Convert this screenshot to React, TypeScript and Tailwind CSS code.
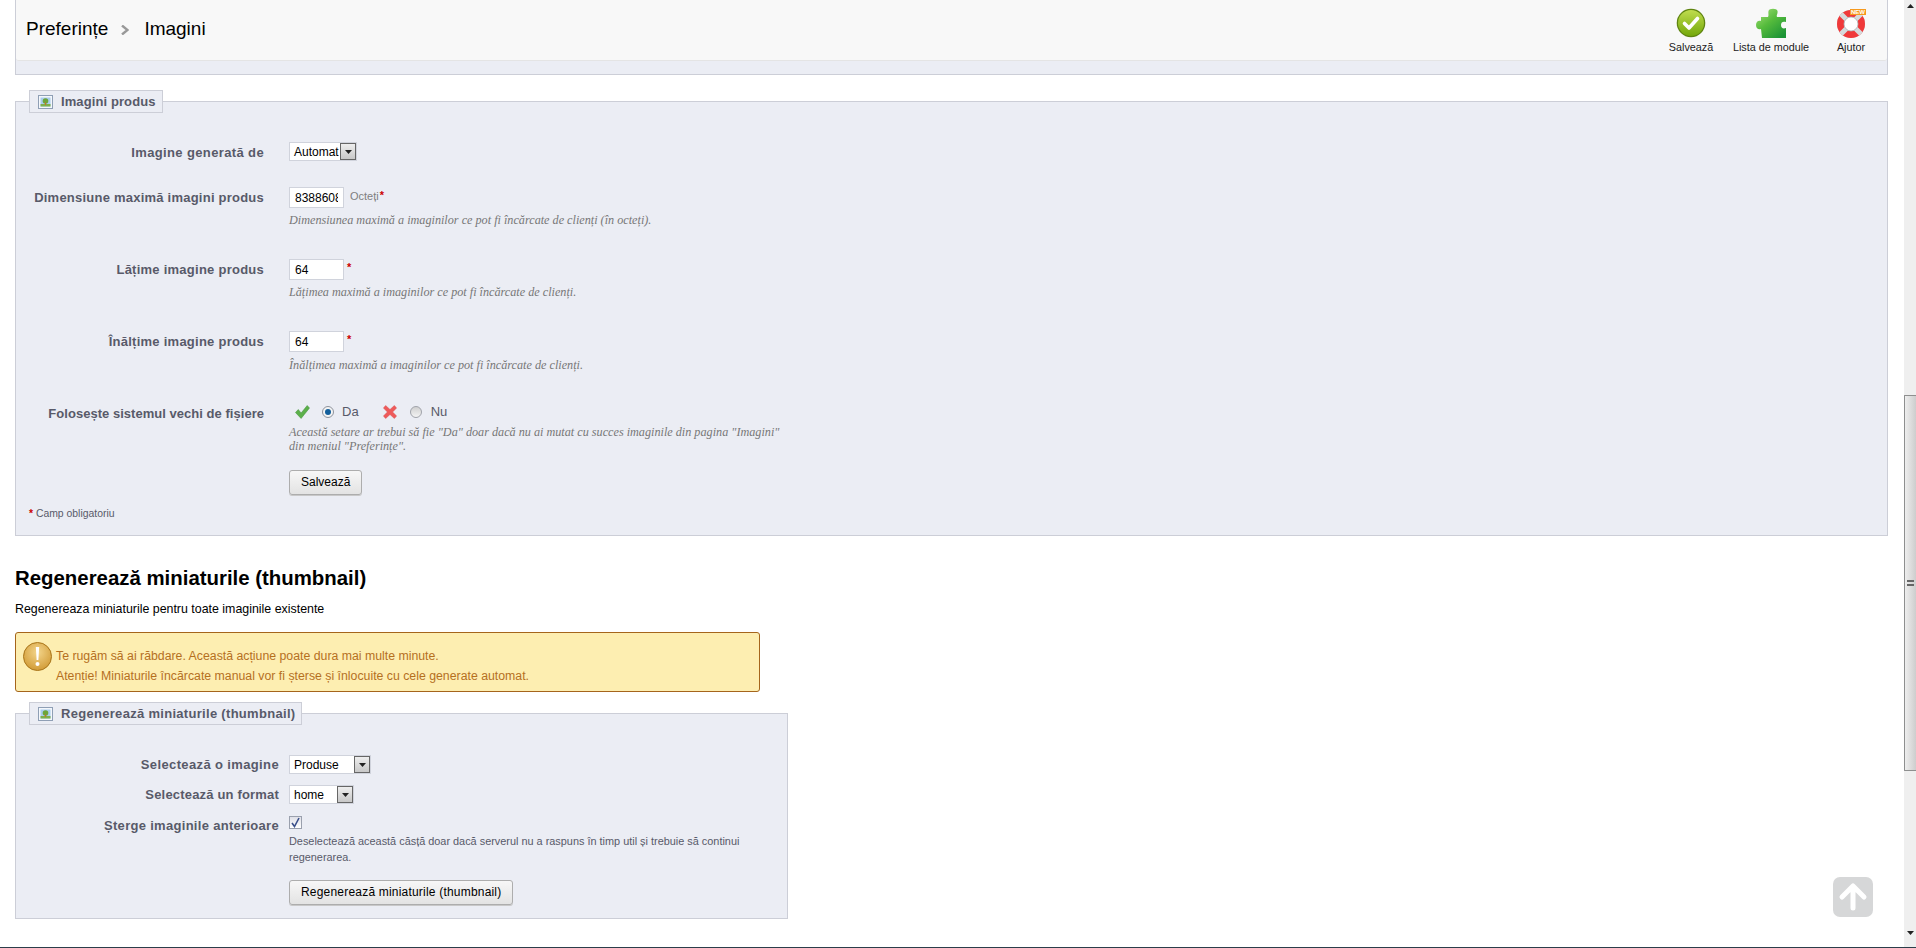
import type { ReactNode } from "react";

const ImageIcon = () => (
  <svg width="15" height="16" viewBox="0 0 15 16" className="shrink-0">
    <rect x="0.5" y="1.5" width="14" height="13" fill="#f4f7fb" stroke="#8f9fb5" />
    <rect x="2.5" y="3.5" width="10" height="9" fill="#a9cdee" />
    <rect x="2.5" y="10" width="10" height="2.5" fill="#7fb04c" />
    <circle cx="7.5" cy="7" r="2.8" fill="#6da53a" />
    <rect x="6.9" y="8.5" width="1.2" height="2.5" fill="#c0762c" />
  </svg>
);

const SaveIcon = () => (
  <svg width="30" height="30" viewBox="0 0 30 30">
    <defs>
      <linearGradient id="saveFill" x1="0" y1="0" x2="0" y2="1">
        <stop offset="0" stopColor="#bfdc4e" />
        <stop offset="1" stopColor="#74a80a" />
      </linearGradient>
    </defs>
    <circle cx="15" cy="15" r="14.3" fill="#5f8410" />
    <circle cx="15" cy="15" r="13" fill="url(#saveFill)" />
    <path d="M8.5 15.5 L13 20 L21.5 10.5" fill="none" stroke="#fff" strokeWidth="3.6" strokeLinecap="round" strokeLinejoin="round" />
  </svg>
);

const PuzzleIcon = () => (
  <svg width="30" height="30" viewBox="0 0 30 30">
    <defs>
      <linearGradient id="puzzleFill" x1="0" y1="0" x2="0.8" y2="1">
        <stop offset="0" stopColor="#a9e27c" />
        <stop offset="0.5" stopColor="#55bb3c" />
        <stop offset="1" stopColor="#1c9436" />
      </linearGradient>
    </defs>
    <path
      d="M5 9 L12 9 C13 7 12 6 12.5 3 C13 0 21 0 21.5 3 C22 6 20 7 21 9 L30 9 L30 14 C27 13 25 14 25 17 C25 20 27 21 30 20 L30 30 L6 30 L5 21 C3 22 0 21 0 17 C0 13 3 12 5 13 Z"
      fill="url(#puzzleFill)"
    />
  </svg>
);

const HelpIcon = () => (
  <svg width="30" height="30" viewBox="0 0 30 30">
    <circle cx="15" cy="16" r="14" fill="#c9ccce" />
    <circle cx="15" cy="16" r="10.5" fill="none" stroke="#f0393a" strokeWidth="7" />
    <path d="M5 6 L10.5 11.5 M25 6 L19.5 11.5 M5 26 L10.5 20.5 M25 26 L19.5 20.5" stroke="#d6d9db" strokeWidth="5" />
    <circle cx="15" cy="16" r="7" fill="#fff" stroke="#a9aeb2" strokeWidth="0.8" />
    <rect x="14" y="1" width="16" height="6" fill="#f79a1e" />
    <text x="22" y="6.4" textAnchor="middle" fontSize="6" fontWeight="700" fill="#fff" fontFamily="Liberation Sans">NEW</text>
  </svg>
);

const WarningIcon = () => (
  <svg width="29" height="29" viewBox="0 0 29 29" className="shrink-0">
    <defs>
      <radialGradient id="warnFill" cx="0.5" cy="0.35" r="0.7">
        <stop offset="0" stopColor="#f3d58b" />
        <stop offset="1" stopColor="#cf9730" />
      </radialGradient>
    </defs>
    <circle cx="14.5" cy="14.5" r="14" fill="url(#warnFill)" stroke="#a9751a" />
    <path d="M12.8 5 L16.2 5 L15.4 18 L13.6 18 Z" fill="#fff" />
    <circle cx="14.5" cy="22" r="2" fill="#fff" />
  </svg>
);

const Arrow = ({ up }: { up?: boolean }) => (
  <svg width="7" height="4" viewBox="0 0 7 4">
    <path d={up ? "M0 4 L7 4 L3.5 0 Z" : "M0 0 L7 0 L3.5 4 Z"} fill="#222" />
  </svg>
);

// old windows style dropdown
const FakeSelect = ({ text, width }: { text: string; width: string }) => (
  <div className={`flex h-[19px] items-center overflow-hidden border border-[#d0d3dc] bg-white ${width}`}>
    <span className="overflow-hidden whitespace-nowrap pl-[4px] text-[12px] text-black">{text}</span>
    <span className="ml-auto flex h-[17px] w-[16px] shrink-0 items-center justify-center border border-[#666] bg-gradient-to-b from-[#eeeeee] to-[#c8c8c8]">
      <Arrow />
    </span>
  </div>
);

const Star = () => <span className="text-[11px] font-bold leading-[16px] text-[#cc0000]">*</span>;

const TextInput = ({ value }: { value: string }) => (
  <input
    readOnly
    defaultValue={value}
    className="h-[21px] w-[55px] border border-[#d0d3dc] bg-white pl-[5px] pr-[5px] text-[12px] text-black outline-none [font-family:'Liberation_Sans',sans-serif]"
  />
);

const Help = ({ children }: { children: ReactNode }) => (
  <p className="text-[12.2px] italic leading-[14px] text-[#777777] [font-family:'Liberation_Serif',serif]">{children}</p>
);

const Row = ({ label, top, track, children }: { label: string; top: string; track: string; children: ReactNode }) => (
  <div className={`flex ${top}`}>
    <div className={`w-[248px] text-right text-[13px] font-bold leading-[21px] text-[#585a69] ${track}`}>{label}</div>
    <div className="ml-[25px] flex-1">{children}</div>
  </div>
);

const SmallRow = ({ label, top, track, children }: { label: string; top: string; track: string; children: ReactNode }) => (
  <div className={`flex ${top}`}>
    <div className={`w-[263px] text-right text-[13px] font-bold leading-[20px] text-[#585a69] ${track}`}>{label}</div>
    <div className="ml-[10px]">{children}</div>
  </div>
);

const Legend = ({ children, track }: { children: ReactNode; track: string }) => (
  <legend className={`ml-[13px] flex h-[23px] items-center gap-[8px] border border-[#ccced7] bg-[#ebedf4] pl-[8px] pr-[6px] text-[13px] font-bold text-[#585a69] ${track}`}>
    <ImageIcon />
    {children}
  </legend>
);

const Btn = ({ children, track = "" }: { children: ReactNode; track?: string }) => (
  <button className={`h-[25px] rounded-[3px] border border-[#adadad] bg-gradient-to-b from-[#f7f7f7] to-[#e3e3e3] px-[11px] text-[12px] text-black shadow-[0_1px_0_#c8c8c8] ${track}`}>
    {children}
  </button>
);

const ToolItem = ({ icon, label, w }: { icon: ReactNode; label: string; w: string }) => (
  <div className={`flex flex-col items-center ${w}`}>
    <div className="h-[32px]">{icon}</div>
    <span className="mt-px whitespace-nowrap text-[10.8px] leading-[13px] text-[#222]">{label}</span>
  </div>
);

export default function App() {
  return (
    <div className="relative flex h-[948px] flex-col overflow-hidden bg-white [font-family:'Liberation_Sans',Arial,sans-serif]">
      <div className="flex min-h-0 flex-1">
        <main className="flex-1 pl-[15px] pr-[16px]">
          {/* toolbar */}
          <div className="h-[75px] border-x border-b border-[#ccced7] bg-[#ebedf4]">
            <div className="flex h-[61px] items-start justify-between rounded-b-[3px] border-b border-[#e4e4e4] bg-[#f8f8f8] pl-[10px] pr-[6px]">
              <div className="flex h-[59px] items-center text-[19px] text-black">
                <span>Preferințe</span>
                <svg width="8" height="10" viewBox="0 0 8 10" className="ml-[13px] mr-[15px]">
                  <path d="M1 0.5 L6.5 5 L1 9.5" fill="none" stroke="#999" strokeWidth="2.4" />
                </svg>
                <span>Imagini</span>
              </div>
              <div className="flex pt-[8px]">
                <ToolItem icon={<SaveIcon />} label="Salvează" w="w-[60px]" />
                <ToolItem icon={<PuzzleIcon />} label="Lista de module" w="w-[100px]" />
                <ToolItem icon={<HelpIcon />} label="Ajutor" w="w-[60px]" />
              </div>
            </div>
          </div>

          {/* imagini produs */}
          <fieldset className="mt-[15px] h-[446px] border border-[#ccced7] bg-[#ebedf4]">
            <Legend track="tracking-[0.1px]">Imagini produs</Legend>
            <Row label="Imagine generată de" top="mt-[29px]" track="tracking-[0.37px]">
              <FakeSelect text="Automat" width="w-[68px]" />
            </Row>
            <Row label="Dimensiune maximă imagini produs" top="mt-[24px]" track="tracking-[0.23px]">
              <div className="flex items-start">
                <TextInput value="8388608" />
                <span className="ml-[6px] text-[11px] leading-[18px] text-[#7f7f7f]">Octeți</span>
                <span className="ml-px flex"><Star /></span>
              </div>
              <div className="mt-[5px]">
                <Help>Dimensiunea maximă a imaginilor ce pot fi încărcate de clienți (în octeți).</Help>
              </div>
            </Row>
            <Row label="Lățime imagine produs" top="mt-[32px]" track="tracking-[0.25px]">
              <div className="flex items-start">
                <TextInput value="64" />
                <span className="ml-[3px] flex"><Star /></span>
              </div>
              <div className="mt-[5px]">
                <Help>Lățimea maximă a imaginilor ce pot fi încărcate de clienți.</Help>
              </div>
            </Row>
            <Row label="Înălțime imagine produs" top="mt-[32px]" track="tracking-[0.25px]">
              <div className="flex items-start">
                <TextInput value="64" />
                <span className="ml-[3px] flex"><Star /></span>
              </div>
              <div className="mt-[6px]">
                <Help>Înălțimea maximă a imaginilor ce pot fi încărcate de clienți.</Help>
              </div>
            </Row>
            <Row label="Folosește sistemul vechi de fișiere" top="mt-[31px]" track="tracking-[0.03px]">
              <div className="flex h-[18px] items-center pl-[6px] text-[13px] text-[#585a69]">
                <svg width="15" height="14" viewBox="0 0 16 14" preserveAspectRatio="none">
                  <path d="M0.5 7.5 L3.5 4.5 L6.5 8 L13 0.5 L15.5 3 L6.5 13.5 Z" fill="#5cb04a" stroke="#3f8c35" strokeWidth="0.5" />
                </svg>
                <span className="ml-[12px] flex h-[12px] w-[12px] items-center justify-center rounded-full border border-[#8d929c] bg-[#f4f4f4]">
                  <span className="h-[6px] w-[6px] rounded-full bg-[#135f9c]" />
                </span>
                <span className="ml-[8px]">Da</span>
                <svg width="14" height="14" viewBox="0 0 16 14" preserveAspectRatio="none" className="ml-[24px]">
                  <path d="M3 0.5 L8 4.5 L13 0.5 L15.5 3 L11 7 L15.5 11 L13 13.5 L8 9.5 L3 13.5 L0.5 11 L5 7 L0.5 3 Z" fill="#ee5a5a" stroke="#d94a4a" strokeWidth="0.5" />
                </svg>
                <span className="ml-[13px] h-[12px] w-[12px] rounded-full border border-[#a0a3aa] bg-gradient-to-b from-[#d0d0d0] to-[#f4f4f4]" />
                <span className="ml-[9px]">Nu</span>
              </div>
              <div className="mt-[4px] w-[495px]">
                <Help>
                  Această setare ar trebui să fie "Da" doar dacă nu ai mutat cu succes imaginile din pagina "Imagini" din meniul "Preferințe".
                </Help>
              </div>
              <div className="mt-[16px]">
                <Btn>Salvează</Btn>
              </div>
            </Row>
            <p className="ml-[13px] mt-[12px] text-[10.4px] leading-[14px] text-[#585a69]">
              <span className="font-bold text-[#cc0000]">*</span> Camp obligatoriu
            </p>
          </fieldset>

          {/* regenerare */}
          <h2 className="mt-[30px] text-[20.4px] font-bold leading-[24px] text-black">Regenerează miniaturile (thumbnail)</h2>
          <p className="mt-[12px] text-[12.4px] leading-[14px] text-black">Regenereaza miniaturile pentru toate imaginile existente</p>
          <div className="mt-[16px] flex h-[60px] w-[745px] items-start rounded-[3px] border border-[#a5651c] bg-[#fdeeb1] pl-[7px] pt-[9px] text-[12.3px] leading-[20px] text-[#b5701f]">
            <WarningIcon />
            <div className="ml-[4px] pt-[4px]">
              <div>Te rugăm să ai răbdare. Această acțiune poate dura mai multe minute.</div>
              <div>Atenție! Miniaturile încărcate manual vor fi șterse și înlocuite cu cele generate automat.</div>
            </div>
          </div>

          <fieldset className="mt-[10px] h-[217px] w-[773px] border border-[#ccced7] bg-[#ebedf4]">
            <Legend track="tracking-[0.3px]">Regenerează miniaturile (thumbnail)</Legend>
            <SmallRow label="Selectează o imagine" top="mt-[30px]" track="tracking-[0.37px]">
              <FakeSelect text="Produse" width="w-[82px]" />
            </SmallRow>
            <SmallRow label="Selectează un format" top="mt-[10px]" track="tracking-[0.18px]">
              <FakeSelect text="home" width="w-[65px]" />
            </SmallRow>
            <SmallRow label="Șterge imaginile anterioare" top="mt-[11px]" track="tracking-[0.3px]">
              <div className="w-[480px]">
                <div className="flex h-[13px] w-[13px] items-center justify-center border border-[#9aa0ad] bg-gradient-to-b from-[#dfe0e8] to-[#ffffff]">
                  <svg width="9" height="11" viewBox="0 0 9 11">
                    <path d="M1 6 L3.5 9.5 L8 1" fill="none" stroke="#3a4f8a" strokeWidth="1.6" />
                  </svg>
                </div>
                <p className="mt-[4px] text-[10.9px] leading-[16px] text-[#585a69]">
                  Deselectează această căsță doar dacă serverul nu a raspuns în timp util și trebuie să continui regenerarea.
                </p>
                <div className="mt-[14px]">
                  <Btn track="tracking-[0.2px]">Regenerează miniaturile (thumbnail)</Btn>
                </div>
              </div>
            </SmallRow>
          </fieldset>
        </main>

        {/* scrollbar */}
        <div className="flex w-[12px] flex-col bg-[#efefef]">
          <div className="flex h-[12px] items-center justify-center"><Arrow up /></div>
          <div className="h-[383px]" />
          <div className="flex h-[376px] items-center justify-center rounded-l-[1px] border border-r-0 border-[#8e8f8f] bg-gradient-to-r from-[#eeeeee] to-[#cdcdcd]">
            <span className="h-[6px] w-[7px] border-y-2 border-[#666]" />
          </div>
          <div className="flex-1" />
          <div className="flex h-[16px] items-start justify-center"><Arrow /></div>
        </div>
      </div>

      {/* taskbar edge */}
      <div className="h-px bg-[#2c3e4a]" />

      {/* back to top */}
      <div className="absolute left-[1833px] top-[877px] flex h-[40px] w-[40px] items-center justify-center rounded-[7px] bg-[#d6d7d8]">
        <svg width="30" height="30" viewBox="0 0 30 30">
          <path d="M4 15 L15 4 L26 15 M15 5 L15 26" fill="none" stroke="#fff" strokeWidth="5" strokeLinecap="round" strokeLinejoin="round" />
        </svg>
      </div>
    </div>
  );
}
